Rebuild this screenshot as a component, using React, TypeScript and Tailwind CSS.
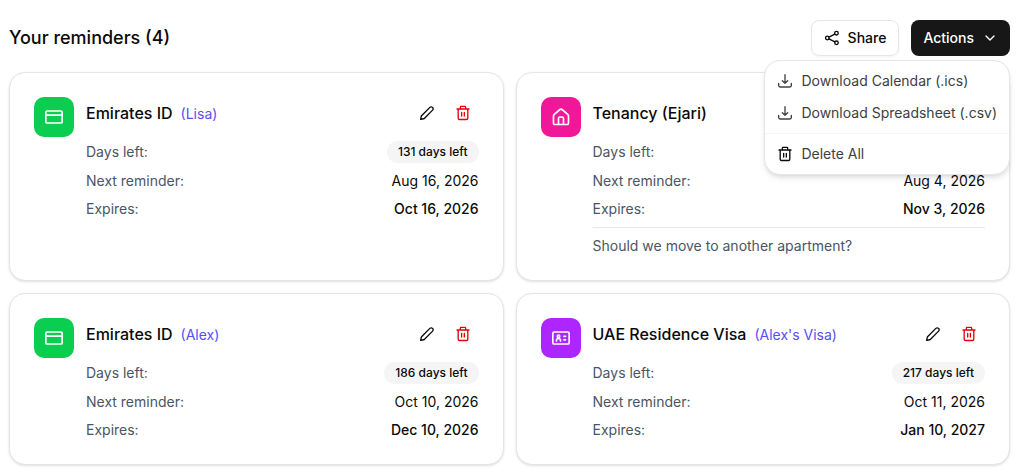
import { useState } from 'react';
import type { ReactNode } from 'react';
import { ChevronDown } from 'lucide-react';

interface IconProps {
  className?: string;
}

interface Reminder {
  id: string;
  title: string;
  label?: string;
  icon: (props: IconProps) => ReactNode;
  color: string;
  daysLeft: number;
  nextReminder: string;
  expires: string;
  note?: string;
}

function Icon({ className, children }: { className?: string; children: ReactNode }) {
  return (
    <svg
      className={className}
      viewBox="0 0 24 24"
      fill="none"
      stroke="currentColor"
      strokeWidth="2"
      strokeLinecap="round"
      strokeLinejoin="round"
      aria-hidden="true"
    >
      {children}
    </svg>
  );
}

const CardIcon = ({ className }: IconProps) => (
  <Icon className={className}>
    <rect x="2.2" y="4.8" width="19.6" height="14.4" rx="1.6" />
    <path d="M2.200 9.700h19.600" />
  </Icon>
);

const HomeIcon = ({ className }: IconProps) => (
  <Icon className={className}>
    <path d="M3 10.700a2.500 2.500 0 0 1 .9-1.900l6.500-5.500a2.500 2.500 0 0 1 3.200 0l6.500 5.500a2.500 2.500 0 0 1 .9 1.900V19.400a1.600 1.600 0 0 1-1.600 1.600H4.600A1.600 1.600 0 0 1 3 19.400z" />
    <path d="M9 21v-7.400a1.400 1.400 0 0 1 1.400-1.400h3.200a1.400 1.400 0 0 1 1.400 1.400V21" />
  </Icon>
);

const IdIcon = ({ className }: IconProps) => (
  <Icon className={className}>
    <rect x="2.200" y="4.800" width="19.600" height="14.400" rx="1.600" />
    <circle cx="9" cy="9.900" r="1.500" />
    <path d="M6.600 15.500v-.5a2.400 2.400 0 0 1 4.800 0v.5M15.500 10h2M15.500 14.200h2" />
  </Icon>
);

const PencilIcon = ({ className }: IconProps) => (
  <Icon className={className}>
    <path d="M2.500 21.500l.9-4.300a3 3 0 0 1 .8-1.500L16.300 3.600a2.700 2.700 0 0 1 3.900 0l.2.200a2.700 2.700 0 0 1 0 3.900L8.300 19.800a3 3 0 0 1-1.500.8z" />
  </Icon>
);

const TrashIcon = ({ className }: IconProps) => (
  <Icon className={className}>
    <path d="M3 6h18M8 6V3.200A1.200 1.200 0 0 1 9.200 2h5.600A1.200 1.200 0 0 1 16 3.200V6M4.800 6v13.800a2 2 0 0 0 2 2h10.400a2 2 0 0 0 2-2V6M10 11v5.500M14 11v5.500" />
  </Icon>
);

const DownloadIcon = ({ className }: IconProps) => (
  <Icon className={className}>
    <path d="M12 2.500v13M8 11.500l4 4 4-4M2.500 15.500v3a2.500 2.500 0 0 0 2.500 2.500h14a2.500 2.500 0 0 0 2.500-2.500v-3" />
  </Icon>
);

const ShareIcon = ({ className }: IconProps) => (
  <Icon className={className}>
    <circle cx="5" cy="12" r="2.700" />
    <circle cx="18.700" cy="4.800" r="2.700" />
    <circle cx="18.700" cy="19.200" r="2.700" />
    <path d="M7.500 10.700l8.700-4.600M7.500 13.300l8.700 4.600" />
  </Icon>
);

const REMINDERS: Reminder[] = [
  { id: '1', title: 'Emirates ID', label: 'Lisa', icon: CardIcon, color: 'bg-[#0bce51]', daysLeft: 131, nextReminder: 'Aug 16, 2026', expires: 'Oct 16, 2026' },
  { id: '2', title: 'Tenancy (Ejari)', icon: HomeIcon, color: 'bg-[#f01899]', daysLeft: 149, nextReminder: 'Aug 4, 2026', expires: 'Nov 3, 2026', note: 'Should we move to another apartment?' },
  { id: '3', title: 'Emirates ID', label: 'Alex', icon: CardIcon, color: 'bg-[#0bce51]', daysLeft: 186, nextReminder: 'Oct 10, 2026', expires: 'Dec 10, 2026' },
  { id: '4', title: 'UAE Residence Visa', label: "Alex's Visa", icon: IdIcon, color: 'bg-[#ad26ff]', daysLeft: 217, nextReminder: 'Oct 11, 2026', expires: 'Jan 10, 2027' },
];

function ReminderCard({ reminder, onDelete }: { reminder: Reminder; onDelete: () => void }) {
  return (
    <article className="flex gap-3 rounded-2xl border border-neutral-200 bg-white p-6 shadow-sm">
      <div className={`flex size-10 shrink-0 items-center justify-center rounded-[10px] text-white ${reminder.color}`}>
        <reminder.icon className="size-5" />
      </div>
      <div className="min-w-0 flex-1">
        <div className="flex h-8 items-center justify-between">
          <div className="flex items-baseline gap-2">
            <h2 className="text-base font-medium">{reminder.title}</h2>
            {reminder.label && <span className="text-sm text-[#5b4cfa]">({reminder.label})</span>}
          </div>
          <div className="flex gap-1">
            <button aria-label="Edit" className="flex size-8 items-center justify-center rounded-md hover:bg-neutral-100">
              <PencilIcon className="size-4" />
            </button>
            <button aria-label="Delete" onClick={onDelete} className="flex size-8 items-center justify-center rounded-md text-[#e7000b] hover:bg-red-50">
              <TrashIcon className="size-4" />
            </button>
          </div>
        </div>
        <dl className="mt-3 space-y-2 text-sm">
          <div className="flex items-center justify-between">
            <dt className="text-gray-600">Days left:</dt>
            <dd className="rounded-full bg-neutral-100 px-[11px] py-[3px] text-xs font-medium">{reminder.daysLeft} days left</dd>
          </div>
          <div className="flex justify-between">
            <dt className="text-gray-600">Next reminder:</dt>
            <dd>{reminder.nextReminder}</dd>
          </div>
          <div className="flex justify-between">
            <dt className="text-gray-600">Expires:</dt>
            <dd className="font-medium">{reminder.expires}</dd>
          </div>
        </dl>
        {reminder.note && (
          <p className="mt-2 border-t border-gray-200 pt-2 text-sm text-gray-600">{reminder.note}</p>
        )}
      </div>
    </article>
  );
}

export default function App() {
  const [reminders, setReminders] = useState(REMINDERS);
  const [menuOpen, setMenuOpen] = useState(true);

  const itemClass = 'flex h-8 w-full items-center gap-2 px-3 text-left hover:bg-neutral-100';

  return (
    <main className="bg-white pt-5 pr-[18px] pb-3 pl-[9px] font-['Inter',sans-serif] text-neutral-950">
      {/* Header */}
      <header className="mb-4 flex items-center justify-between">
        <h1 className="text-lg font-medium">Your reminders ({reminders.length})</h1>
        <div className="relative flex gap-3">
          <button className="flex h-9 items-center gap-2 rounded-lg border border-neutral-200 px-3 text-sm font-medium shadow-xs">
            <ShareIcon className="size-4" />
            Share
          </button>
          <button
            aria-expanded={menuOpen}
            onClick={() => setMenuOpen(!menuOpen)}
            className="flex h-9 items-center gap-2 rounded-lg bg-neutral-900 px-3 text-sm font-medium text-white"
          >
            Actions
            <ChevronDown className="size-4" />
          </button>
          {menuOpen && (
            <div className="absolute top-full right-0 z-10 mt-1 rounded-2xl border border-neutral-200 bg-white py-1 text-sm whitespace-nowrap text-neutral-700 shadow-md">
              <button className={itemClass}>
                <DownloadIcon className="size-4" />
                Download Calendar (.ics)
              </button>
              <button className={itemClass}>
                <DownloadIcon className="size-4" />
                Download Spreadsheet (.csv)
              </button>
              <div className="my-1 border-t border-neutral-100" />
              <button className={itemClass} onClick={() => setReminders([])}>
                <TrashIcon className="size-4 text-neutral-950" />
                Delete All
              </button>
            </div>
          )}
        </div>
      </header>

      {/* Reminder cards */}
      <section className="grid grid-cols-2 gap-3">
        {reminders.map((reminder) => (
          <ReminderCard
            key={reminder.id}
            reminder={reminder}
            onDelete={() => setReminders(prev => prev.filter(r => r.id !== reminder.id))}
          />
        ))}
      </section>
    </main>
  );
}
